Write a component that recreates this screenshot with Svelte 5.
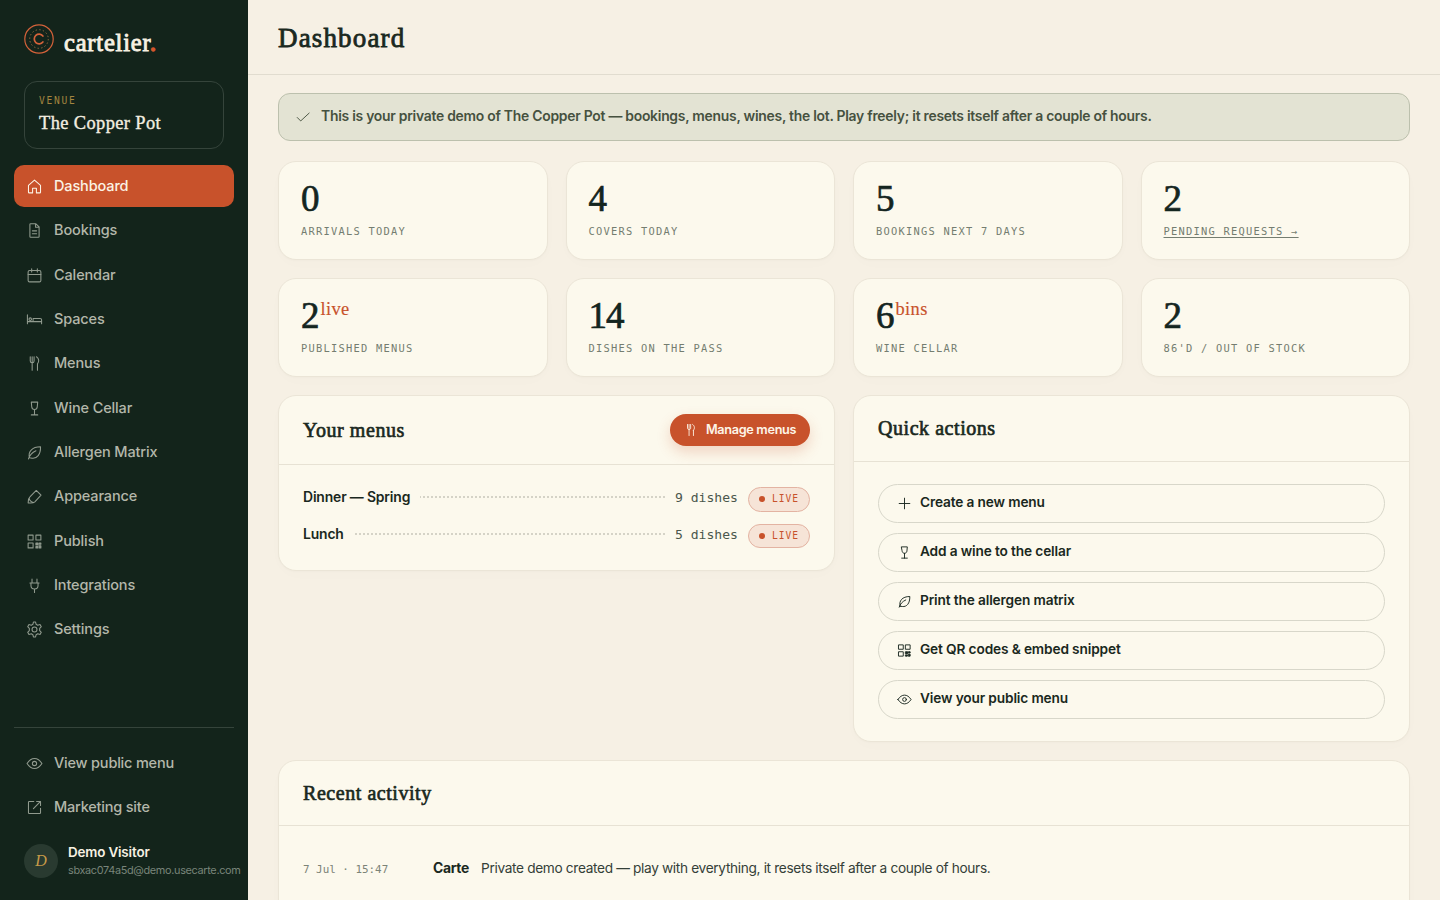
<script>
  const nav = [
    ['home', 'Dashboard'],
    ['file', 'Bookings'],
    ['calendar', 'Calendar'],
    ['bed', 'Spaces'],
    ['menu', 'Menus'],
    ['wine', 'Wine Cellar'],
    ['leaf', 'Allergen Matrix'],
    ['brush', 'Appearance'],
    ['qr', 'Publish'],
    ['plug', 'Integrations'],
    ['gear', 'Settings'],
  ];
  const links = [
    ['eye', 'View public menu'],
    ['external', 'Marketing site'],
  ];
  const stats = [
    { value: '0', label: 'Arrivals today' },
    { value: '4', label: 'Covers today' },
    { value: '5', label: 'Bookings next 7 days' },
    { value: '2', label: 'Pending requests →', link: true },
    { value: '2', unit: 'live', label: 'Published menus' },
    { value: '14', label: 'Dishes on the pass' },
    { value: '6', unit: 'bins', label: 'Wine cellar' },
    { value: '2', label: "86'd / out of stock" },
  ];
  const menus = [
    { name: 'Dinner — Spring', count: '9 dishes' },
    { name: 'Lunch', count: '5 dishes' },
  ];
  const actions = [
    ['plus', 'Create a new menu'],
    ['wine', 'Add a wine to the cellar'],
    ['leaf', 'Print the allergen matrix'],
    ['qr', 'Get QR codes & embed snippet'],
    ['eye', 'View your public menu'],
  ];
</script>

{#snippet icon(name)}
  <svg class="icon" viewBox="0 0 24 24" fill="none" stroke="currentColor" stroke-width="1.5" stroke-linecap="round" stroke-linejoin="round" aria-hidden="true">
    {#if name === 'home'}
      <path d="M3.500 10.500 12 3l8.500 7.500V20a1 1 0 0 1-1 1h-4.800v-6.500H9.300V21H4.500a1 1 0 0 1-1-1z" />
    {:else if name === 'file'}
      <path d="M6.500 2.500h7.500L18.500 7v13.500a1 1 0 0 1-1 1h-11a1 1 0 0 1-1-1v-17a1 1 0 0 1 1-1zM13.500 2.500v5h5M9 12.500h6M9 16.500h6" />
    {:else if name === 'calendar'}
      <rect x="3" y="5" width="18" height="16" rx="2" /><path d="M3 10.500h18M8 2.500v4.500M16 2.500v4.500" />
    {:else if name === 'bed'}
      <path d="M2 5.500v12.500M2 15h20M22 18v-5.500a2 2 0 0 0-2-2H10V15" /><circle cx="6" cy="11.500" r="1.800" />
    {:else if name === 'menu'}
      <path d="M6 2.500v6c0 1.800 1 2.700 2.700 2.700s2.700-.9 2.700-2.700v-6M8.700 2.500v19M16.200 21.500V12.500M14.800 2.500c3.800 2.500 4 7 1.400 10" />
    {:else if name === 'wine'}
      <path d="M7.500 3h9l-.6 6.500c-.2 2.300-1.800 3.800-3.900 3.800s-3.700-1.500-3.900-3.800zM12 13.300V21M7.500 21h9" />
    {:else if name === 'leaf'}
      <path d="M5 19.500C2.500 11 8.500 4 20.500 4c.3 11-5 17-12 16-1.500-.2-2.700-.5-3.500-.5M3.500 21c1.500-5 5-9 10.500-11.500" />
    {:else if name === 'brush'}
      <path d="M14.500 3.500 21.200 10l-8.700 9.500c-2 2-5.500 2-9.500 1.500-.2-3.500.3-6.500 2.500-8.500zM4.500 14c0 3 2 5 5.500 6.500" />
    {:else if name === 'qr'}
      <path d="M3 3h7v7H3zM14 3h7v7h-7zM3 14h7v7H3z" /><path d="M14 14h3v3h-3zM18.500 18h2.500v3h-2.500zM18.800 14H21v2h-2.200zM14 19h2.500v2H14z" fill="currentColor" />
    {:else if name === 'plug'}
      <path d="M8.500 3v5.500M15.500 3v5.500M5.500 8.500h13M7 8.500v3.500a5 5 0 0 0 10 0V8.500M12 17v5" />
    {:else if name === 'gear'}
      <path d="M9.700 4.600 10.500 1.500h3l.8 3.100 2.200 1.300 3.300-.9 1.800 3-2.300 2.500v3l2.300 2.500-1.800 3-3.300-.9-2.200 1.300-.8 3.100h-3l-.8-3.100-2.200-1.300-3.300.9-1.800-3 2.300-2.500v-3L2.400 8l1.800-3 3.300.9z" /><circle cx="12" cy="12" r="3.500" />
    {:else if name === 'eye'}
      <path d="M1.500 12c3-4.700 6.700-7 10.500-7s7.500 2.300 10.500 7c-3 4.700-6.700 7-10.500 7s-7.500-2.300-10.500-7z" /><circle cx="12" cy="12" r="3" />
    {:else if name === 'external'}
      <path d="M11 3.500H4.500a1 1 0 0 0-1 1v15a1 1 0 0 0 1 1h15a1 1 0 0 0 1-1V13M15 3.500h5.500V9M20.500 3.500 10.500 13.500" />
    {:else if name === 'plus'}
      <path d="M12 3.500v17M3.500 12h17" />
    {:else if name === 'check'}
      <path d="m2 12 5.500 5.500L21 5" />
    {/if}
  </svg>
{/snippet}

<div class="shell">
  <aside class="sidebar">
    <div class="brand">
      <svg class="logo" viewBox="0 0 30 30" fill="none" stroke="#d4623a" aria-hidden="true">
        <circle cx="15" cy="15" r="14.200" stroke-width="1.200" />
        <circle cx="15" cy="15" r="9.300" stroke="#95683f" stroke-width="1" stroke-dasharray="1.400 2.250" />
        <path d="M18.900 12.100a4.800 4.800 0 1 0 0 5.800" stroke-width="1.700" stroke-linecap="round" />
      </svg>
      <span class="wordmark">cartelier<span class="dot">.</span></span>
    </div>
    <div class="venue">
      <span class="eyebrow">VENUE</span>
      <span class="venue-name">The Copper Pot</span>
    </div>
    <nav class="nav">
      {#each nav as [glyph, label], i}
        <a class="nav-item" class:active={i === 0} href="#{glyph}">{@render icon(glyph)}<span>{label}</span></a>
      {/each}
    </nav>
    <div class="side-foot">
      {#each links as [glyph, label]}
        <a class="nav-item" href="#{glyph}">{@render icon(glyph)}<span>{label}</span></a>
      {/each}
      <div class="user">
        <span class="avatar">D</span>
        <div class="who">
          <span class="user-name">Demo Visitor</span>
          <span class="email">sbxac074a5d@demo.usecarte.com</span>
        </div>
      </div>
    </div>
  </aside>

  <div class="main">
    <header class="topbar"><h1>Dashboard</h1></header>
    <main class="content">
      <div class="notice">
        {@render icon('check')}
        <span>This is your private demo of The Copper Pot — bookings, menus, wines, the lot. Play freely; it resets itself after a couple of hours.</span>
      </div>

      <section class="stats">
        {#each stats as s}
          <div class="card stat">
            <div class="value"><span>{s.value}</span>{#if s.unit}<span class="unit">{s.unit}</span>{/if}</div>
            <div class="label"><span class:link={s.link}>{s.label}</span></div>
          </div>
        {/each}
      </section>

      <section class="panels">
        <div class="card">
          <div class="head">
            <h2>Your menus</h2>
            <button class="primary">{@render icon('menu')}<span>Manage menus</span></button>
          </div>
          <div class="body menu-list">
            {#each menus as m}
              <div class="menu-row">
                <span class="menu-name">{m.name}</span>
                <span class="leader"></span>
                <span class="count">{m.count}</span>
                <span class="pill"><i></i><span>LIVE</span></span>
              </div>
            {/each}
          </div>
        </div>
        <div class="card">
          <div class="head"><h2>Quick actions</h2></div>
          <div class="body action-list">
            {#each actions as [glyph, label]}
              <button class="action">{@render icon(glyph)}<span>{label}</span></button>
            {/each}
          </div>
        </div>
      </section>

      <section class="card recent">
        <div class="head"><h2>Recent activity</h2></div>
        <div class="entry">
          <span class="when">7 Jul · 15:47</span>
          <strong>Carte</strong>
          <span class="what">Private demo created — play with everything, it resets itself after a couple of hours.</span>
        </div>
      </section>
    </main>
  </div>
</div>

<style>
  :global(body) { margin: 0; overflow: hidden; }
  * { box-sizing: border-box; }
  .shell {
    display: grid;
    grid-template-columns: 248px 1fr;
    height: 900px;
    overflow: hidden;
    background: #f6f0e4;
    color: #1a2820;
    font-family: Inter, "Liberation Sans", sans-serif;
  }
  h1, h2, .wordmark, .venue-name, .value {
    font-family: "Liberation Serif", serif;
    font-weight: 400;
    margin: 0;
  }
  .icon { width: 17px; height: 17px; flex: none; display: block; }

  .sidebar {
    display: flex;
    flex-direction: column;
    height: 900px;
    padding: 24px 14px 21px;
    background: #13241b;
  }
  .brand { display: flex; align-items: flex-start; gap: 10px; height: 57px; padding: 0 10px; }
  .logo { width: 30px; height: 30px; }
  .wordmark {
    padding-top: 3px;
    color: #f7f1e3;
    font-size: 24.500px;
    line-height: 31px;
    letter-spacing: .8px;
    -webkit-text-stroke: .85px currentColor;
  }
  .dot { color: #d4572d; -webkit-text-stroke: 1.600px currentColor; }
  .venue {
    display: flex;
    flex-direction: column;
    height: 68px;
    margin: 0 10px 16px;
    padding: 12px 14px;
    border: 1px solid #35443b;
    border-radius: 13px;
  }
  .eyebrow {
    color: #a3853f;
    font: 9.600px/14px "DejaVu Sans Mono", monospace;
    letter-spacing: 1.700px;
  }
  .venue-name {
    margin-top: 3px;
    color: #f3eee0;
    font-size: 18.400px;
    line-height: 24px;
    letter-spacing: .4px;
    -webkit-text-stroke: .35px currentColor;
  }
  .nav { display: flex; flex-direction: column; gap: 2px; }
  .nav-item {
    display: flex;
    align-items: center;
    gap: 11px;
    height: 42.300px;
    padding: 0 12px;
    border-radius: 10px;
    color: #b3b7aa;
    font-size: 14.500px;
    font-weight: 500;
    letter-spacing: -.13px;
    text-decoration: none;
  }
  .nav-item .icon { margin-top: 1px; color: #909a8e; }
  .nav-item span { padding-bottom: 1px; }
  .nav-item.active { background: #c8522b; color: #fbf3e5; }
  .nav-item.active .icon { color: #fbf3e5; }
  .side-foot {
    display: flex;
    flex-direction: column;
    gap: 2px;
    margin-top: auto;
    padding-top: 14px;
    border-top: 1px solid #35443b;
  }
  .side-foot .nav-item { height: 42px; letter-spacing: -.2px; }
  .user { display: flex; align-items: center; gap: 10px; height: 48.600px; padding: 13.600px 0 1px 10px; }
  .avatar {
    display: grid;
    place-items: center;
    flex: none;
    width: 34px;
    height: 34px;
    border-radius: 50%;
    background: #293a30;
    color: #c79a48;
    font: italic 16px/34px "Liberation Serif", serif;
  }
  .who { display: flex; flex-direction: column; white-space: nowrap; }
  .user-name { color: #f7f1e3; font-size: 13.400px; font-weight: 600; line-height: 18px; letter-spacing: -.15px; }
  .email { color: #79847a; font-size: 10.900px; line-height: 18px; letter-spacing: -.34px; }

  .main { min-width: 0; }
  .topbar { height: 75px; padding: 21px 30px 19px; border-bottom: 1px solid #e1dccf; }
  h1 { font-size: 27px; line-height: 34px; letter-spacing: 1.150px; -webkit-text-stroke: .8px currentColor; }
  .content { display: flex; flex-direction: column; padding: 18px 30px 0; }
  .notice {
    display: flex;
    align-items: center;
    gap: 10px;
    height: 48px;
    margin-bottom: 20px;
    padding: 0 17px;
    border: 1px solid #bcc0ad;
    border-radius: 12px;
    background: #e3e3d3;
    color: #46513f;
    font-size: 13.900px;
    font-weight: 600;
    letter-spacing: -.255px;
    white-space: nowrap;
  }
  .notice .icon { width: 15px; height: 15px; }
  .notice span { padding-bottom: 2px; }
  .card {
    border: 1px solid #ebe5d7;
    border-radius: 18px;
    background: #fcf9ed;
    box-shadow: 0 1px 2px rgba(30, 40, 30, .02), 0 4px 18px rgba(30, 40, 30, .012);
  }
  .stats { display: grid; grid-template-columns: repeat(4, 1fr); gap: 18px; }
  .stat { height: 99px; padding: 18px 22px; }
  .value {
    display: flex;
    align-items: flex-start;
    height: 36px;
    color: #14251f;
    font-size: 37px;
    line-height: 37px;
    letter-spacing: -1px;
    -webkit-text-stroke: .7px currentColor;
  }
  .unit { margin-left: 2px; color: #c8522b; font-size: 18.400px; line-height: 24px; letter-spacing: .4px; -webkit-text-stroke: .15px currentColor; }
  .label {
    margin-top: 8px;
    color: #747d70;
    font: 10.400px/14px "DejaVu Sans Mono", monospace;
    letter-spacing: 1.250px;
    text-transform: uppercase;
  }
  .link { text-decoration: underline; text-underline-offset: 2px; }
  .panels { display: grid; grid-template-columns: 1fr 1fr; align-items: start; gap: 18px; margin: 18px 0; }
  .head {
    display: flex;
    align-items: center;
    justify-content: space-between;
    padding: 18px 24px;
    border-bottom: 1px solid #e7e2d4;
  }
  h2 { font-size: 20px; line-height: 29px; letter-spacing: .55px; -webkit-text-stroke: .65px currentColor; }
  .primary {
    display: flex;
    align-items: center;
    gap: 8px;
    width: 140px;
    height: 32px;
    padding: 0 14px;
    border: 0;
    border-radius: 16px;
    background: #c8522b;
    box-shadow: 0 6px 14px rgba(200, 82, 43, .22);
    color: #fdf5e8;
    font: 600 12.700px Inter, sans-serif;
    letter-spacing: -.33px;
    white-space: nowrap;
  }
  .primary .icon { width: 14px; height: 14px; }
  .primary span { padding-bottom: 1px; }
  .body { display: flex; flex-direction: column; padding: 22px 24px; }
  .menu-list { gap: 12.300px; }
  .menu-row { display: flex; align-items: center; gap: 10px; height: 24.500px; }
  .menu-name { padding-bottom: 4px; font-size: 13.900px; font-weight: 600; letter-spacing: -.15px; }
  .leader {
    flex: 1;
    height: 2px;
    margin-bottom: 5px;
    background: repeating-linear-gradient(270deg, #d5d3c7 0 2px, transparent 2px 4px);
  }
  .count { padding-bottom: 3px; color: #4b574c; font: 13.080px/20px "DejaVu Sans Mono", monospace; }
  .pill {
    display: flex;
    align-items: center;
    gap: 7px;
    width: 62px;
    height: 24.500px;
    padding: 0 10px;
    border: 1px solid #e3b3a2;
    border-radius: 13px;
    background: #f6e4d7;
    color: #c8522b;
    font: 9.600px/14px "DejaVu Sans Mono", monospace;
    letter-spacing: 1px;
  }
  .pill i { width: 6px; height: 6px; flex: none; border-radius: 50%; background: #c8522b; }
  .action-list { gap: 10px; }
  .action {
    display: flex;
    align-items: center;
    gap: 8px;
    height: 39px;
    padding: 0 18px;
    border: 1px solid #d8d7ca;
    border-radius: 20px;
    background: transparent;
    color: #1a2820;
    font: 600 13.700px Inter, sans-serif;
    letter-spacing: -.14px;
  }
  .action .icon { width: 15px; height: 15px; }
  .action span { padding-bottom: 3px; }
  .recent { height: 180px; }
  .recent .head { height: 65px; }
  .entry { display: flex; align-items: center; height: 84px; padding: 0 24px; white-space: nowrap; }
  .when { width: 130px; padding-top: 2px; color: #7b8377; font: 10.900px "DejaVu Sans Mono", monospace; }
  .entry strong { width: 48px; font-size: 13.900px; font-weight: 700; letter-spacing: -.3px; }
  .what { color: #344038; font-size: 13.700px; letter-spacing: -.345px; }
</style>
